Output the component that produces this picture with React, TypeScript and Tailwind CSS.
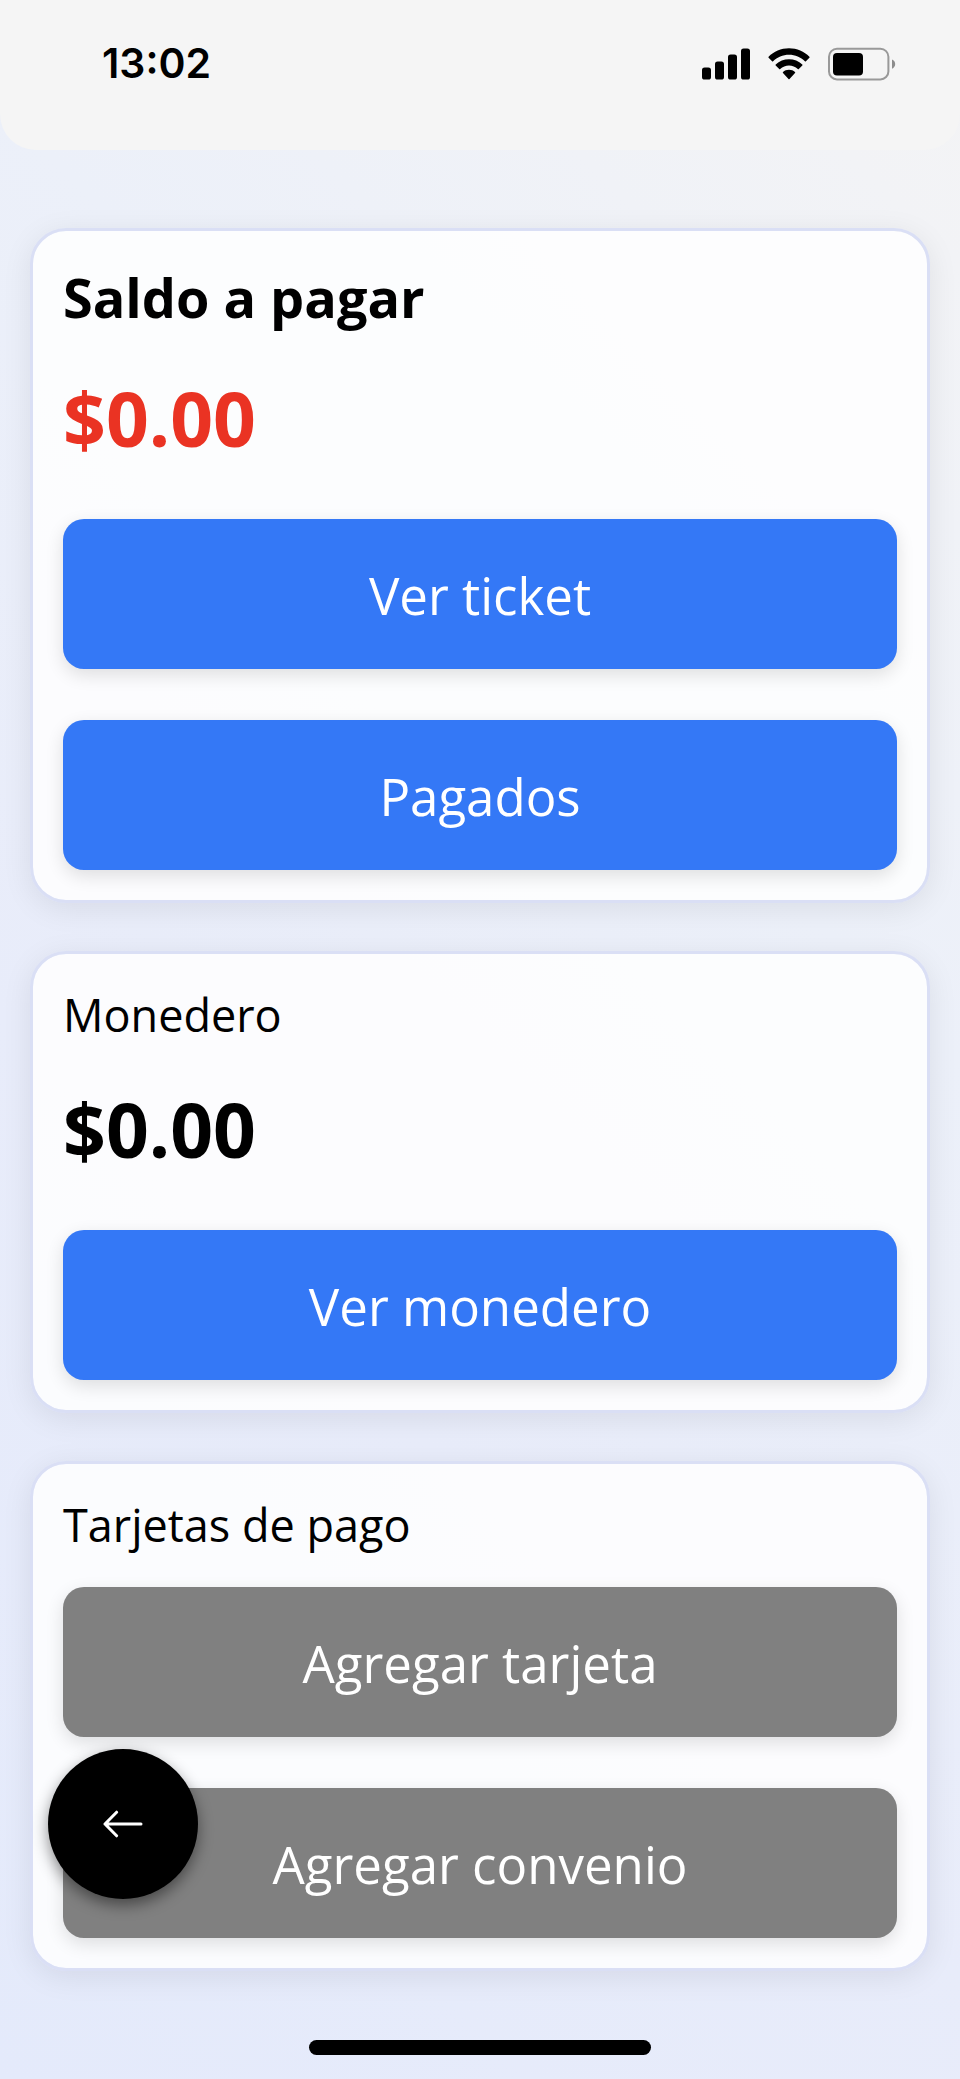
import type { ReactNode } from "react";

function StatusBar() {
  return (
    <header className="flex h-[150px] items-start justify-between rounded-b-[36px] bg-[#f5f5f5] pt-[38px] pr-16 pl-[102px]">
      <time className="font-['Inter',sans-serif] text-[41px] leading-[51px] font-semibold text-black">
        13:02
      </time>
      <div className="flex h-[51px] items-center gap-[18px]">
        <svg width="48" height="32" viewBox="0 0 48 32" aria-label="Señal">
          <rect x="0" y="19.5" width="9" height="12" rx="2.6" />
          <rect x="13" y="13.5" width="9" height="18" rx="2.6" />
          <rect x="26" y="6.5" width="9" height="25" rx="2.6" />
          <rect x="39" y="0.5" width="9" height="31" rx="2.6" />
        </svg>
        <svg width="42" height="32" viewBox="0 0 42 32" aria-label="Wi-Fi">
          <path d="M21 0.3C29 0.3 36.2 3.4 41.4 8.8Q41.9 9.3 41.4 9.8L37.9 13.3Q37.4 13.7 36.9 13.2C32.8 9.1 27.2 6.7 21 6.7S9.2 9.1 5.1 13.2Q4.6 13.7 4.1 13.3L0.6 9.8Q0.1 9.3 0.6 8.8C5.8 3.4 13 0.3 21 0.3Z" />
          <path d="M21 11.2C26 11.2 30.7 13.1 34.3 16.5Q34.8 17 34.3 17.5L30.8 21Q30.3 21.4 29.8 21C27.4 18.8 24.3 17.5 21 17.5S14.6 18.8 12.2 21Q11.7 21.4 11.2 21L7.7 17.5Q7.2 17 7.7 16.5C11.3 13.1 16 11.2 21 11.2Z" />
          <path d="M21 21.8C23.5 21.8 25.4 22.6 27 24Q27.5 24.6 27 25.1L21.5 31Q21 31.5 20.5 31L15 25.1Q14.5 24.6 15 24C16.6 22.6 18.5 21.8 21 21.8Z" />
        </svg>
        <svg width="68" height="34" viewBox="0 0 68 34" aria-label="Batería">
          <rect x="1" y="1.8" width="59.4" height="30.6" rx="8" fill="none" stroke="#999999" strokeWidth="2" />
          <rect x="5" y="6" width="30" height="22.4" rx="4" />
          <path d="M64 12.4C66 13.2 67.2 15 67.2 17.1S66 21 64 21.8Z" fill="#8c8c8c" />
        </svg>
      </div>
    </header>
  );
}

function Card({ children }: { children: ReactNode }) {
  return (
    <section className="rounded-[36px] border-[3px] border-[#dadff5] bg-white/85 bg-clip-padding p-[30px] shadow-[0_6px_30px_rgba(0,0,0,0.08)]">
      {children}
    </section>
  );
}

function Title({ children }: { children: ReactNode }) {
  return <h2 className="text-[45px] leading-[61px]">{children}</h2>;
}

function ActionButton({ children, muted = false }: { children: ReactNode; muted?: boolean }) {
  return (
    <button
      type="button"
      className={`h-[150px] w-full rounded-[21px] pt-0.5 text-[51px] leading-[69px] text-white shadow-[0_6px_18px_rgba(0,0,0,0.12)] ${
        muted ? "bg-[#808080]" : "bg-[#3478f6]"
      }`}
    >
      {children}
    </button>
  );
}

export default function App() {
  return (
    <div className="relative flex min-h-screen flex-col bg-[linear-gradient(225deg,#f4f4f5_0%,#ecf0f9_35%,#e8ecfa_65%,#e4eafb_100%)] font-['Open_Sans',sans-serif] text-black">
      <StatusBar />
      <main className="flex grow flex-col gap-12 px-[30px] pt-[78px]">
        <Card>
          <h1 className="text-[54px] leading-[73px] font-bold">Saldo a pagar</h1>
          <p className="mt-[33px] text-[75px] leading-[102px] font-bold text-[#ea3323]">$0.00</p>
          <div className="mt-[50px] flex flex-col gap-[51px]">
            <ActionButton>Ver ticket</ActionButton>
            <ActionButton>Pagados</ActionButton>
          </div>
        </Card>
        <Card>
          <Title>Monedero</Title>
          <p className="mt-[33px] text-[75px] leading-[102px] font-bold">$0.00</p>
          <div className="mt-[50px]">
            <ActionButton>Ver monedero</ActionButton>
          </div>
        </Card>
        <Card>
          <Title>Tarjetas de pago</Title>
          <div className="mt-8 flex flex-col gap-[51px]">
            <ActionButton muted>Agregar tarjeta</ActionButton>
            <ActionButton muted>Agregar convenio</ActionButton>
          </div>
        </Card>
      </main>
      <footer className="flex justify-center pt-[69px] pb-6">
        <div className="h-[15px] w-[342px] rounded-full bg-black" />
      </footer>
      <button
        type="button"
        aria-label="Volver"
        className="absolute bottom-[180px] left-12 flex size-[150px] items-center justify-center rounded-full bg-black shadow-[0_6px_15px_rgba(0,0,0,0.45)]"
      >
        <svg width="40" height="28" viewBox="0 0 40 28" fill="none" stroke="#ffffff" strokeWidth="3" strokeLinecap="round" strokeLinejoin="round">
          <path d="M38 14H2M13.6 2.2L2 14L13.6 25.8" />
        </svg>
      </button>
    </div>
  );
}
